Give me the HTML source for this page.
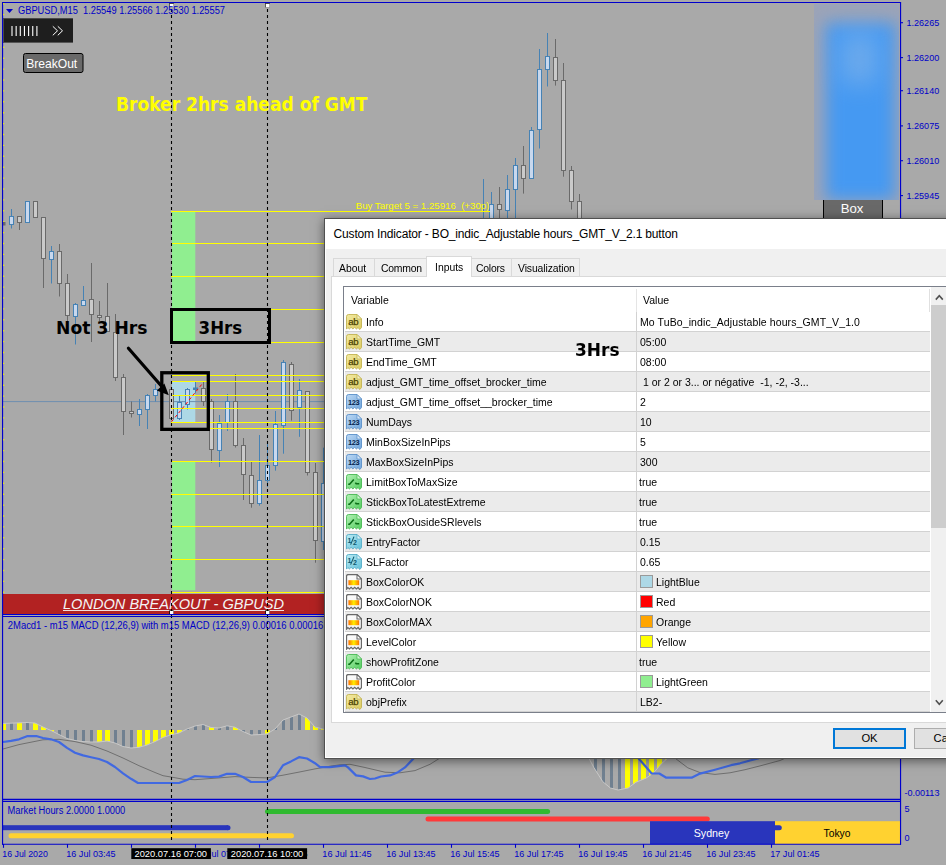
<!DOCTYPE html>
<html><head><meta charset="utf-8"><title>Custom Indicator</title>
<style>
html,body{margin:0;padding:0;}
body{width:946px;height:865px;position:relative;overflow:hidden;background:#a9a9a9;font-family:'Liberation Sans',sans-serif;}
#blurbox{position:absolute;left:814px;top:4px;width:85px;height:196px;overflow:hidden;background:#9ca4b8;}
#blurbox i{position:absolute;left:12px;top:19px;right:4px;bottom:0px;background:#4599f2;filter:blur(8px);display:block}
#blurbox b{position:absolute;left:28px;top:30px;right:22px;height:50px;background:#7ab0ea;filter:blur(12px);display:block;opacity:.75}
#dlg{position:absolute;left:324px;top:218px;width:640px;height:541px;background:#f0f0f0;box-shadow:0 2px 10px rgba(0,0,0,.5);border:1px solid #505050;box-sizing:border-box}
#dlg>*{margin-left:-1px;margin-top:-1px}
#inb{position:absolute;left:0;top:0;width:640px;height:539px;border:1px solid #fff;margin:0;box-sizing:border-box}
#ttl{position:absolute;left:1px;top:1px;right:0;height:30px;background:#fff;}
#ttl span{position:absolute;left:8.6px;top:7.6px;font-size:12px;color:#000;white-space:nowrap;letter-spacing:-0.165px}
.tab{position:absolute;top:40px;height:19px;border:1px solid #d9d9d9;border-bottom:none;background:#f0f0f0;font-size:10.4px;color:#000;box-sizing:border-box;white-space:nowrap}
.tab span{position:absolute;top:3px;font-size:11.5px;transform:scaleX(0.904);transform-origin:0 50%}
.tab.sel{top:38px;height:21px;background:#fff;z-index:3;}
.tab.sel span{top:3.6px}
#tabpage{position:absolute;left:7px;top:58px;width:640px;height:447px;background:#fff;border:1px solid #d9d9d9;box-sizing:border-box}
#list{position:absolute;left:19px;top:68px;width:640px;height:427px;background:#fff;border:1px solid #7a7f8a;box-sizing:border-box;overflow:hidden}
.hd{position:absolute;top:5.8px;color:#000}
.row{position:absolute;left:1px;width:585px;height:19px;border-bottom:1px solid #d2d2d2;background:#fff;font-size:10.5px;color:#000;white-space:nowrap}
.row.g{background:#ebebeb}
.ic{position:absolute;left:1px;top:2px}
.nm,.vt,.vt2,.hd{font-size:11.8px;transform:scaleX(0.89);transform-origin:0 50%}
.vt.w{letter-spacing:0.115px}
.nm{position:absolute;left:21.3px;top:3.4px;}
.val{position:absolute;left:291px;top:0;width:294px;height:19px;border-left:1px solid #d2d2d2;}
.vt{position:absolute;left:2.8px;top:3.4px}
.vt.t{left:2.2px}
.vt2{position:absolute;left:19.4px;top:3.4px}
  .sw{position:absolute;left:3px;top:3px;width:11px;height:11px;border:1px solid #9a9a9a;box-sizing:content-box}
#sb{position:absolute;left:587px;top:0;width:40px;height:426px;background:#f0f0f0}
#sb i{position:absolute;left:0;top:18px;width:40px;height:223px;background:#cdcdcd;display:block}
#ok{position:absolute;left:509px;top:510px;width:73px;height:21px;box-sizing:border-box;border:2px solid #0078d7;background:#e1e1e1;font-size:11.2px;text-align:center;line-height:17px}
#ca{position:absolute;left:590px;top:510px;width:73px;height:21px;box-sizing:border-box;border:1px solid #adadad;background:#e1e1e1;font-size:11.2px;line-height:19px;padding-left:18.6px}
#h3{position:absolute;left:251px;top:120.6px;font-family:'DejaVu Sans',sans-serif;font-weight:bold;font-size:18.2px;color:#000;z-index:5;transform:scaleX(0.935);transform-origin:0 50%}
</style></head><body>
<svg width="946" height="865" viewBox="0 0 946 865" style="position:absolute;left:0;top:0" font-family="'Liberation Sans', sans-serif">
<rect width="946" height="865" fill="#a9a9a9"/>
<!-- profit zones -->
<rect x="172" y="212" width="23.3" height="130.5" fill="#90ee90"/>
<rect x="172" y="461" width="23.3" height="129.3" fill="#90ee90"/>
<rect x="172" y="382" width="23.3" height="40.3" fill="#add8e6"/>
<line x1="3" y1="401.6" x2="900" y2="401.6" stroke="#6f8fb0" stroke-width="1"/>
<line x1="3.5" y1="3" x2="3.5" y2="614" stroke="#ffff00" stroke-width="1.4" stroke-dasharray="1.4 9.5"/>
<line x1="11.5" y1="209" x2="11.5" y2="228.5" stroke="#4682b4" stroke-width="1"/>
<rect x="9.5" y="216.5" width="4" height="8.0" fill="#c8d8ee" stroke="#4682b4" stroke-width="1"/>
<line x1="19.5" y1="216" x2="19.5" y2="230" stroke="#6a6a6a" stroke-width="1"/>
<rect x="17.5" y="216.5" width="4" height="6.0" fill="#cacaca" stroke="#6a6a6a" stroke-width="1"/>
<line x1="27.5" y1="201" x2="27.5" y2="222" stroke="#4682b4" stroke-width="1"/>
<rect x="25.5" y="201.5" width="4" height="21.0" fill="#c8d8ee" stroke="#4682b4" stroke-width="1"/>
<line x1="35.5" y1="201" x2="35.5" y2="217" stroke="#6a6a6a" stroke-width="1"/>
<rect x="33.5" y="201.5" width="4" height="16.0" fill="#cacaca" stroke="#6a6a6a" stroke-width="1"/>
<line x1="43.5" y1="217" x2="43.5" y2="288" stroke="#6a6a6a" stroke-width="1"/>
<rect x="41.5" y="217.5" width="4" height="41.0" fill="#cacaca" stroke="#6a6a6a" stroke-width="1"/>
<line x1="51.5" y1="246" x2="51.5" y2="283.5" stroke="#4682b4" stroke-width="1"/>
<rect x="49.5" y="251.5" width="4" height="8.0" fill="#c8d8ee" stroke="#4682b4" stroke-width="1"/>
<line x1="59.5" y1="244" x2="59.5" y2="296.5" stroke="#6a6a6a" stroke-width="1"/>
<rect x="57.5" y="251.5" width="4" height="32.0" fill="#cacaca" stroke="#6a6a6a" stroke-width="1"/>
<line x1="67.5" y1="274" x2="67.5" y2="321" stroke="#6a6a6a" stroke-width="1"/>
<rect x="65.5" y="283.5" width="4" height="32.0" fill="#cacaca" stroke="#6a6a6a" stroke-width="1"/>
<line x1="75.5" y1="303" x2="75.5" y2="344.5" stroke="#4682b4" stroke-width="1"/>
<rect x="73.5" y="304.5" width="4" height="12.0" fill="#c8d8ee" stroke="#4682b4" stroke-width="1"/>
<line x1="83.5" y1="286" x2="83.5" y2="305" stroke="#4682b4" stroke-width="1"/>
<rect x="81.5" y="300.5" width="4" height="5.0" fill="#c8d8ee" stroke="#4682b4" stroke-width="1"/>
<line x1="91.5" y1="263" x2="91.5" y2="342" stroke="#6a6a6a" stroke-width="1"/>
<rect x="89.5" y="299.5" width="4" height="15.0" fill="#cacaca" stroke="#6a6a6a" stroke-width="1"/>
<line x1="99.5" y1="301" x2="99.5" y2="321" stroke="#6a6a6a" stroke-width="1"/>
<rect x="97.5" y="315.5" width="4" height="2.0" fill="#cacaca" stroke="#6a6a6a" stroke-width="1"/>
<line x1="107.5" y1="283" x2="107.5" y2="332" stroke="#6a6a6a" stroke-width="1"/>
<rect x="105.5" y="316.5" width="4" height="15.0" fill="#cacaca" stroke="#6a6a6a" stroke-width="1"/>
<line x1="115.5" y1="314" x2="115.5" y2="381" stroke="#6a6a6a" stroke-width="1"/>
<rect x="113.5" y="332.5" width="4" height="45.0" fill="#cacaca" stroke="#6a6a6a" stroke-width="1"/>
<line x1="123.5" y1="374" x2="123.5" y2="435" stroke="#6a6a6a" stroke-width="1"/>
<rect x="121.5" y="377.5" width="4" height="34.0" fill="#cacaca" stroke="#6a6a6a" stroke-width="1"/>
<line x1="131.5" y1="401.5" x2="131.5" y2="417.5" stroke="#6a6a6a" stroke-width="1"/>
<rect x="129.5" y="411.5" width="4" height="2.0" fill="#cacaca" stroke="#6a6a6a" stroke-width="1"/>
<line x1="139.5" y1="399" x2="139.5" y2="426" stroke="#4682b4" stroke-width="1"/>
<rect x="137.5" y="409.5" width="4" height="5.0" fill="#c8d8ee" stroke="#4682b4" stroke-width="1"/>
<line x1="147.5" y1="394" x2="147.5" y2="429" stroke="#4682b4" stroke-width="1"/>
<rect x="145.5" y="395.5" width="4" height="14.0" fill="#c8d8ee" stroke="#4682b4" stroke-width="1"/>
<line x1="155.5" y1="384" x2="155.5" y2="401.5" stroke="#4682b4" stroke-width="1"/>
<rect x="153.5" y="389.5" width="4" height="6.0" fill="#c8d8ee" stroke="#4682b4" stroke-width="1"/>
<line x1="171.5" y1="389" x2="171.5" y2="418.5" stroke="#6a6a6a" stroke-width="1"/>
<rect x="169.5" y="389.5" width="4" height="29.0" fill="#cacaca" stroke="#6a6a6a" stroke-width="1"/>
<line x1="179.5" y1="396" x2="179.5" y2="420" stroke="#4682b4" stroke-width="1"/>
<rect x="177.5" y="402.5" width="4" height="16.0" fill="#c8d8ee" stroke="#4682b4" stroke-width="1"/>
<line x1="187.5" y1="388" x2="187.5" y2="409.5" stroke="#4682b4" stroke-width="1"/>
<rect x="185.5" y="389.5" width="4" height="15.0" fill="#c8d8ee" stroke="#4682b4" stroke-width="1"/>
<line x1="195.5" y1="382" x2="195.5" y2="393.5" stroke="#4682b4" stroke-width="1"/>
<rect x="193.5" y="388" width="4" height="1.5" fill="#4682b4" stroke="#4682b4" stroke-width="1"/>
<line x1="203.5" y1="382" x2="203.5" y2="406" stroke="#6a6a6a" stroke-width="1"/>
<rect x="201.5" y="388.5" width="4" height="13.0" fill="#cacaca" stroke="#6a6a6a" stroke-width="1"/>
<line x1="211.5" y1="399" x2="211.5" y2="462.5" stroke="#6a6a6a" stroke-width="1"/>
<rect x="209.5" y="401.5" width="4" height="48.0" fill="#cacaca" stroke="#6a6a6a" stroke-width="1"/>
<line x1="219.5" y1="415" x2="219.5" y2="467" stroke="#4682b4" stroke-width="1"/>
<rect x="217.5" y="423.5" width="4" height="27.0" fill="#c8d8ee" stroke="#4682b4" stroke-width="1"/>
<line x1="227.5" y1="394" x2="227.5" y2="431" stroke="#4682b4" stroke-width="1"/>
<rect x="225.5" y="401.5" width="4" height="21.0" fill="#c8d8ee" stroke="#4682b4" stroke-width="1"/>
<line x1="235.5" y1="374" x2="235.5" y2="447.5" stroke="#6a6a6a" stroke-width="1"/>
<rect x="233.5" y="401.5" width="4" height="44.0" fill="#cacaca" stroke="#6a6a6a" stroke-width="1"/>
<line x1="243.5" y1="438" x2="243.5" y2="500" stroke="#6a6a6a" stroke-width="1"/>
<rect x="241.5" y="445.5" width="4" height="29.0" fill="#cacaca" stroke="#6a6a6a" stroke-width="1"/>
<line x1="251.5" y1="462" x2="251.5" y2="507.7" stroke="#6a6a6a" stroke-width="1"/>
<rect x="249.5" y="475.5" width="4" height="28.0" fill="#cacaca" stroke="#6a6a6a" stroke-width="1"/>
<line x1="259.5" y1="435" x2="259.5" y2="505.7" stroke="#4682b4" stroke-width="1"/>
<rect x="257.5" y="480.5" width="4" height="23.0" fill="#c8d8ee" stroke="#4682b4" stroke-width="1"/>
<line x1="267.5" y1="444" x2="267.5" y2="487" stroke="#4682b4" stroke-width="1"/>
<rect x="265.5" y="465.5" width="4" height="15.0" fill="#c8d8ee" stroke="#4682b4" stroke-width="1"/>
<line x1="275.5" y1="411" x2="275.5" y2="470.7" stroke="#4682b4" stroke-width="1"/>
<rect x="273.5" y="424.5" width="4" height="41.0" fill="#c8d8ee" stroke="#4682b4" stroke-width="1"/>
<line x1="283.5" y1="360" x2="283.5" y2="453.7" stroke="#4682b4" stroke-width="1"/>
<rect x="281.5" y="362.5" width="4" height="63.0" fill="#c8d8ee" stroke="#4682b4" stroke-width="1"/>
<line x1="291.5" y1="362" x2="291.5" y2="420.6" stroke="#6a6a6a" stroke-width="1"/>
<rect x="289.5" y="364.5" width="4" height="46.0" fill="#cacaca" stroke="#6a6a6a" stroke-width="1"/>
<line x1="299.5" y1="379" x2="299.5" y2="436.8" stroke="#4682b4" stroke-width="1"/>
<rect x="297.5" y="390.5" width="4" height="17.0" fill="#c8d8ee" stroke="#4682b4" stroke-width="1"/>
<line x1="307.5" y1="391.3" x2="307.5" y2="475.5" stroke="#6a6a6a" stroke-width="1"/>
<rect x="305.5" y="391.5" width="4" height="81.0" fill="#cacaca" stroke="#6a6a6a" stroke-width="1"/>
<line x1="315.5" y1="463" x2="315.5" y2="562.7" stroke="#6a6a6a" stroke-width="1"/>
<rect x="313.5" y="472.5" width="4" height="68.0" fill="#cacaca" stroke="#6a6a6a" stroke-width="1"/>
<line x1="323.5" y1="447.7" x2="323.5" y2="550" stroke="#4682b4" stroke-width="1"/>
<rect x="321.5" y="483.5" width="4" height="58.0" fill="#c8d8ee" stroke="#4682b4" stroke-width="1"/>
<line x1="483.5" y1="179" x2="483.5" y2="230" stroke="#4682b4" stroke-width="1"/>
<rect x="481.5" y="222.5" width="4" height="8.0" fill="#c8d8ee" stroke="#4682b4" stroke-width="1"/>
<line x1="491.5" y1="192" x2="491.5" y2="230" stroke="#4682b4" stroke-width="1"/>
<rect x="489.5" y="204.5" width="4" height="26.0" fill="#c8d8ee" stroke="#4682b4" stroke-width="1"/>
<line x1="499.5" y1="187" x2="499.5" y2="225" stroke="#6a6a6a" stroke-width="1"/>
<rect x="497.5" y="204.5" width="4" height="5.0" fill="#cacaca" stroke="#6a6a6a" stroke-width="1"/>
<line x1="507.5" y1="175" x2="507.5" y2="225" stroke="#4682b4" stroke-width="1"/>
<rect x="505.5" y="189.5" width="4" height="21.0" fill="#c8d8ee" stroke="#4682b4" stroke-width="1"/>
<line x1="515.5" y1="158" x2="515.5" y2="225" stroke="#4682b4" stroke-width="1"/>
<rect x="513.5" y="165.5" width="4" height="24.0" fill="#c8d8ee" stroke="#4682b4" stroke-width="1"/>
<line x1="523.5" y1="146" x2="523.5" y2="193.6" stroke="#6a6a6a" stroke-width="1"/>
<rect x="521.5" y="165.5" width="4" height="13.0" fill="#cacaca" stroke="#6a6a6a" stroke-width="1"/>
<line x1="531.5" y1="127" x2="531.5" y2="178.8" stroke="#4682b4" stroke-width="1"/>
<rect x="529.5" y="130.5" width="4" height="48.0" fill="#c8d8ee" stroke="#4682b4" stroke-width="1"/>
<line x1="539.5" y1="49" x2="539.5" y2="148.5" stroke="#4682b4" stroke-width="1"/>
<rect x="537.5" y="69.5" width="4" height="60.0" fill="#c8d8ee" stroke="#4682b4" stroke-width="1"/>
<line x1="547.5" y1="33" x2="547.5" y2="86.5" stroke="#4682b4" stroke-width="1"/>
<rect x="545.5" y="56.5" width="4" height="13.0" fill="#c8d8ee" stroke="#4682b4" stroke-width="1"/>
<line x1="555.5" y1="39" x2="555.5" y2="85.6" stroke="#6a6a6a" stroke-width="1"/>
<rect x="553.5" y="57.5" width="4" height="23.0" fill="#cacaca" stroke="#6a6a6a" stroke-width="1"/>
<line x1="563.5" y1="63" x2="563.5" y2="176.7" stroke="#6a6a6a" stroke-width="1"/>
<rect x="561.5" y="80.5" width="4" height="90.0" fill="#cacaca" stroke="#6a6a6a" stroke-width="1"/>
<line x1="571.5" y1="166" x2="571.5" y2="209.5" stroke="#6a6a6a" stroke-width="1"/>
<rect x="569.5" y="170.5" width="4" height="31.0" fill="#cacaca" stroke="#6a6a6a" stroke-width="1"/>
<line x1="579.5" y1="194" x2="579.5" y2="225" stroke="#6a6a6a" stroke-width="1"/>
<rect x="577.5" y="201.5" width="4" height="24.0" fill="#cacaca" stroke="#6a6a6a" stroke-width="1"/>
<line x1="171" y1="211.5" x2="490" y2="211.5" stroke="#ffff00" stroke-width="1.1"/>
<line x1="171" y1="243.5" x2="600" y2="243.5" stroke="#ffff00" stroke-width="1.1"/>
<line x1="171" y1="276.5" x2="600" y2="276.5" stroke="#ffff00" stroke-width="1.1"/>
<line x1="171" y1="309.5" x2="600" y2="309.5" stroke="#ffff00" stroke-width="1.1"/>
<line x1="171" y1="342.5" x2="600" y2="342.5" stroke="#ffff00" stroke-width="1.1"/>
<line x1="171" y1="375.5" x2="600" y2="375.5" stroke="#ffff00" stroke-width="1.1"/>
<line x1="171" y1="381.5" x2="600" y2="381.5" stroke="#ffff00" stroke-width="1.1"/>
<line x1="171" y1="395.5" x2="600" y2="395.5" stroke="#ffff00" stroke-width="1.1"/>
<line x1="171" y1="408.5" x2="600" y2="408.5" stroke="#ffff00" stroke-width="1.1"/>
<line x1="171" y1="422.5" x2="600" y2="422.5" stroke="#ffff00" stroke-width="1.1"/>
<line x1="171" y1="428.5" x2="600" y2="428.5" stroke="#ffff00" stroke-width="1.1"/>
<line x1="171" y1="461.5" x2="600" y2="461.5" stroke="#ffff00" stroke-width="1.1"/>
<line x1="171" y1="494.5" x2="600" y2="494.5" stroke="#ffff00" stroke-width="1.1"/>
<line x1="171" y1="526.5" x2="600" y2="526.5" stroke="#ffff00" stroke-width="1.1"/>
<line x1="171" y1="559.5" x2="600" y2="559.5" stroke="#ffff00" stroke-width="1.1"/>
<line x1="171" y1="592.5" x2="600" y2="592.5" stroke="#ffff00" stroke-width="1.1"/>
<line x1="171.6" y1="421.7" x2="202" y2="384.1" stroke="#ff0000" stroke-width="1" stroke-dasharray="3 2.6"/>
<text x="355.7" y="209.2" font-size="9.6" fill="#ffff00" textLength="133.7" lengthAdjust="spacingAndGlyphs" style="white-space:pre">Buy Target 5 = 1.25916  (+30p)</text>
<rect x="3" y="222" width="2.5" height="3.5" fill="#6a6a6a"/>
<!-- red banner -->
<rect x="3" y="594" width="897" height="20" fill="#b22222"/>
<text x="63" y="609.3" font-size="14.4" font-style="italic" fill="#f4f4f4" textLength="221" lengthAdjust="spacingAndGlyphs">LONDON BREAKOUT - GBPUSD</text>
<line x1="63" y1="610.5" x2="284" y2="610.5" stroke="#f4f4f4" stroke-width="0.9"/>
<!-- macd -->
<defs><clipPath id="c1"><polygon points="3,723.5 27,722.5 35,723 43,727 51,730.5 59,734.5 67,738.5 75,740.5 83,741.6 91,742 99,742 107,741 115,743 123,746.5 131,748 139,747.3 147,745 155,741.6 163,737.5 171,734.8 179,733 187,729 195,726 203,724.5 211,727.5 219,728 227,725.8 235,727.2 243,731.5 251,735 259,734.6 267,733.9 275,729 283,720 291,717 299,714 307,718 315,727 323,729 331,731 331,730 -5,730 -5,723.5"/></clipPath>
<clipPath id="c2"><polygon points="583,745 588.9,758.2 594,767.8 602.8,781.7 610.4,788 618,790 628.2,788 635.8,782.3 646,778.2 653.6,772.8 661.2,764 667.5,758.2 676,748 676,730 583,730"/></clipPath></defs>
<rect x="3" y="720" width="3" height="10.0" fill="#ffff00" clip-path="url(#c1)"/>
<rect x="10" y="720" width="3" height="10.0" fill="#708090" clip-path="url(#c1)"/>
<rect x="17" y="720" width="5" height="10.0" fill="#ffff00" clip-path="url(#c1)"/>
<rect x="26" y="719" width="3" height="11.0" fill="#708090" clip-path="url(#c1)"/>
<rect x="33" y="719" width="5" height="11.0" fill="#ffff00" clip-path="url(#c1)"/>
<rect x="41" y="723.5" width="5" height="6.5" fill="#ffff00" clip-path="url(#c1)"/>
<rect x="49" y="730" width="5" height="3.0" fill="#ffff00" clip-path="url(#c1)"/>
<rect x="58" y="730" width="3" height="8.4" fill="#708090" clip-path="url(#c1)"/>
<rect x="66" y="730" width="3" height="12.4" fill="#708090" clip-path="url(#c1)"/>
<rect x="74" y="730" width="3" height="14.5" fill="#708090" clip-path="url(#c1)"/>
<rect x="82" y="730" width="3" height="15.6" fill="#708090" clip-path="url(#c1)"/>
<rect x="90" y="730" width="3" height="16.0" fill="#708090" clip-path="url(#c1)"/>
<rect x="97" y="730" width="5" height="16.0" fill="#ffff00" clip-path="url(#c1)"/>
<rect x="105" y="730" width="5" height="15.0" fill="#ffff00" clip-path="url(#c1)"/>
<rect x="114" y="730" width="3" height="17.0" fill="#708090" clip-path="url(#c1)"/>
<rect x="122" y="730" width="3" height="20.4" fill="#708090" clip-path="url(#c1)"/>
<rect x="130" y="730" width="3" height="22.0" fill="#708090" clip-path="url(#c1)"/>
<rect x="137" y="730" width="5" height="21.3" fill="#ffff00" clip-path="url(#c1)"/>
<rect x="145" y="730" width="5" height="19.2" fill="#ffff00" clip-path="url(#c1)"/>
<rect x="153" y="730" width="5" height="15.6" fill="#ffff00" clip-path="url(#c1)"/>
<rect x="161" y="730" width="5" height="11.5" fill="#ffff00" clip-path="url(#c1)"/>
<rect x="169" y="730" width="5" height="8.8" fill="#ffff00" clip-path="url(#c1)"/>
<rect x="177" y="730" width="5" height="7.0" fill="#ffff00" clip-path="url(#c1)"/>
<rect x="186" y="726.6" width="3" height="3.4" fill="#708090" clip-path="url(#c1)"/>
<rect x="194" y="722.1" width="3" height="7.9" fill="#708090" clip-path="url(#c1)"/>
<rect x="202" y="720.9" width="3" height="9.1" fill="#708090" clip-path="url(#c1)"/>
<rect x="209" y="723.6" width="5" height="6.4" fill="#ffff00" clip-path="url(#c1)"/>
<rect x="218" y="724" width="3" height="6.0" fill="#708090" clip-path="url(#c1)"/>
<rect x="226" y="721.8" width="3" height="8.2" fill="#708090" clip-path="url(#c1)"/>
<rect x="233" y="723.2" width="5" height="6.8" fill="#ffff00" clip-path="url(#c1)"/>
<rect x="242" y="730" width="3" height="3.5" fill="#708090" clip-path="url(#c1)"/>
<rect x="250" y="730" width="3" height="8.8" fill="#708090" clip-path="url(#c1)"/>
<rect x="258" y="730" width="3" height="8.4" fill="#708090" clip-path="url(#c1)"/>
<rect x="265" y="730" width="5" height="7.9" fill="#ffff00" clip-path="url(#c1)"/>
<rect x="274" y="726.6" width="3" height="3.4" fill="#708090" clip-path="url(#c1)"/>
<rect x="282" y="716" width="3" height="14.0" fill="#708090" clip-path="url(#c1)"/>
<rect x="290" y="713.2" width="3" height="16.8" fill="#708090" clip-path="url(#c1)"/>
<rect x="298" y="710" width="3" height="20.0" fill="#708090" clip-path="url(#c1)"/>
<rect x="305" y="714.2" width="5" height="15.8" fill="#ffff00" clip-path="url(#c1)"/>
<rect x="313" y="723.2" width="5" height="6.8" fill="#ffff00" clip-path="url(#c1)"/>
<rect x="321" y="727.0" width="5" height="3.0" fill="#ffff00" clip-path="url(#c1)"/>
<rect x="594" y="730" width="3" height="42.0" fill="#708090" clip-path="url(#c2)"/>
<rect x="602" y="730" width="3" height="55.7" fill="#708090" clip-path="url(#c2)"/>
<rect x="610" y="730" width="3" height="62.0" fill="#708090" clip-path="url(#c2)"/>
<rect x="618" y="730" width="3" height="64.0" fill="#708090" clip-path="url(#c2)"/>
<rect x="625" y="730" width="5" height="62.7" fill="#ffff00" clip-path="url(#c2)"/>
<rect x="633" y="730" width="5" height="57.6" fill="#ffff00" clip-path="url(#c2)"/>
<rect x="641" y="730" width="5" height="53.8" fill="#ffff00" clip-path="url(#c2)"/>
<rect x="649" y="730" width="5" height="49.4" fill="#ffff00" clip-path="url(#c2)"/>
<rect x="657" y="730" width="5" height="40.0" fill="#ffff00" clip-path="url(#c2)"/>
<rect x="665" y="730" width="5" height="33.5" fill="#ffff00" clip-path="url(#c2)"/>
<polyline fill="none" stroke="#c8c8c8" stroke-width="1" stroke-linejoin="round" points="3,723.5 27,722.5 35,723 43,727 51,730.5 59,734.5 67,738.5 75,740.5 83,741.6 91,742 99,742 107,741 115,743 123,746.5 131,748 139,747.3 147,745 155,741.6 163,737.5 171,734.8 179,733 187,729 195,726 203,724.5 211,727.5 219,728 227,725.8 235,727.2 243,731.5 251,735 259,734.6 267,733.9 275,729 283,720 291,717 299,714 307,718 315,727 323,729 331,731"/>
<polyline fill="none" stroke="#c8c8c8" stroke-width="1" stroke-linejoin="round" points="583,745 588.9,758.2 594,767.8 602.8,781.7 610.4,788 618,790 628.2,788 635.8,782.3 646,778.2 653.6,772.8 661.2,764 667.5,758.2 676,748"/>
<polyline fill="none" stroke="#707070" stroke-width="1" stroke-linejoin="round" points="3,749 19,744.6 43,739.8 59,739.3 75,741.6 91,745.2 107,751 123,758 139,765.7 155,772.5 163,775.7 171,777 183,779.2 195,779.7 219,777.9 235,776.6 251,777.4 267,777.9 283,775.2 299,772.1 315,768.9 330,766.2 340,764.8 350,764.3 365,767.5 385,772.2 400,772.8 415,770.6 430,764.3 440,758 450,750"/>
<polyline fill="none" stroke="#707070" stroke-width="1" stroke-linejoin="round" points="662,745 675.1,758.2 687.8,767.8 700,772.6 715,774.4 730,772.8 745,769.7 760,765.9 780,760.5 790,756"/>
<polyline fill="none" stroke="#4169e1" stroke-width="2.2" stroke-linejoin="round" points="3,742 11,740.8 19,739.3 27,736.2 37,736.2 43,738 51,739.3 59,742 67,747.9 75,752.7 83,755.4 91,757.2 99,759 107,762 115,767 123,773.4 131,778.8 138,783 179,783 187,780 195,776 211,777 219,776.6 227,773.8 235,773.8 243,777 251,782 267,782 275,777 283,765.3 291,761.4 299,757.2 307,758.5 315,763.2 320,767.1 330,767.1 345,765.4 348,767.4 356,775.4 363,776.4 370,779 375,778.5 381,776.5 390,775.4 398,772.2 405,767.4 414,758 420,750"/>
<polyline fill="none" stroke="#4169e1" stroke-width="2.2" stroke-linejoin="round" points="627,745 638.4,758.2 651.7,773.5 659.3,773.5 666.3,777.7 691.6,777.7 700,773.6 715,769.7 731,765.2 740,763.3 750,760.5 758,758.5 770,752"/>
<!-- market hours -->
<rect x="3" y="825.2" width="225" height="5" fill="#2935bc"/><circle cx="228" cy="827.7" r="2.5" fill="#2935bc"/>
<line x1="11" y1="835.8" x2="291.5" y2="835.8" stroke="#ffd230" stroke-width="5" stroke-linecap="round"/>
<line x1="267.5" y1="811.4" x2="547.6" y2="811.4" stroke="#30ba30" stroke-width="5" stroke-linecap="round"/>
<line x1="428" y1="819.1" x2="707.3" y2="819.1" stroke="#ff3a3a" stroke-width="5" stroke-linecap="round"/>
<rect x="650" y="821.2" width="125" height="23" fill="#2935bc"/>
<rect x="775" y="821.2" width="125.5" height="23" fill="#ffd230"/>
<line x1="775" y1="827.7" x2="779.3" y2="827.7" stroke="#2935bc" stroke-width="5" stroke-linecap="round"/>
<text x="711.5" y="836.7" font-size="10.7" fill="#ffffff" text-anchor="middle">Sydney</text>
<text x="837" y="836.7" font-size="10.3" fill="#000000" text-anchor="middle">Tokyo</text>
<!-- dashed verticals -->
<line x1="171.5" y1="3" x2="171.5" y2="841" stroke="#000" stroke-width="1.1" stroke-dasharray="3 3"/>
<line x1="267.5" y1="3" x2="267.5" y2="841" stroke="#000" stroke-width="1.1" stroke-dasharray="3 3"/>
<rect x="169.3" y="610.3" width="4.2" height="4" fill="#000"/><rect x="265.3" y="610.3" width="4.2" height="4" fill="#000"/>
<rect x="170" y="611" width="3.4" height="3.2" fill="#fff"/><rect x="266" y="611" width="3.4" height="3.2" fill="#fff"/>
<rect x="169.3" y="3" width="4.4" height="4.4" fill="#000"/><rect x="265.3" y="3" width="4.4" height="4.4" fill="#000"/>
<rect x="169.8" y="3.7" width="3.8" height="3.7" fill="#fff"/><rect x="265.8" y="3.7" width="3.8" height="3.7" fill="#fff"/>
<!-- annotation boxes -->
<rect x="171.5" y="309.5" width="98" height="33" fill="none" stroke="#000" stroke-width="3"/>
<rect x="161.8" y="372.75" width="46.5" height="56.6" fill="none" stroke="#000" stroke-width="3.3"/>
<line x1="128.4" y1="348.3" x2="164" y2="389" stroke="#000" stroke-width="3.2" stroke-linecap="round"/>
<polygon points="168.8,395.3 156.8,390.6 164.4,383.6" fill="#000"/>
<text x="56" y="334.3" font-family="'DejaVu Sans', sans-serif" font-weight="bold" font-size="18.2" fill="#000" textLength="91.5" lengthAdjust="spacingAndGlyphs">Not 3 Hrs</text>
<text x="198.6" y="334.3" font-family="'DejaVu Sans', sans-serif" font-weight="bold" font-size="18.2" fill="#000" textLength="43.5" lengthAdjust="spacingAndGlyphs">3Hrs</text>
<text x="116" y="111" font-family="'DejaVu Sans', sans-serif" font-weight="bold" font-size="18.6" fill="#ffff00" textLength="251.5" lengthAdjust="spacingAndGlyphs">Broker 2hrs ahead of GMT</text>
<!-- pane borders -->
<g stroke="#0000cd" stroke-width="1.15" fill="none">
<line x1="2.55" y1="2" x2="2.55" y2="844.7"/>
<line x1="2" y1="2.5" x2="901" y2="2.5"/>
<line x1="900.55" y1="2" x2="900.55" y2="844.7"/>
<line x1="2" y1="614.5" x2="901" y2="614.5"/>
<line x1="2" y1="616.5" x2="901" y2="616.5"/>
<line x1="2" y1="799.35" x2="901" y2="799.35"/>
<line x1="2" y1="801.35" x2="901" y2="801.35"/>
<line x1="2" y1="844.2" x2="901" y2="844.2"/>
</g>
<line x1="900" y1="22.7" x2="903" y2="22.7" stroke="#0000cd" stroke-width="1.1"/>
<text x="906.5" y="26.0" font-size="9.05" fill="#0000c8">1.26265</text>
<line x1="900" y1="57.6" x2="903" y2="57.6" stroke="#0000cd" stroke-width="1.1"/>
<text x="906.5" y="60.9" font-size="9.05" fill="#0000c8">1.26200</text>
<line x1="900" y1="90.7" x2="903" y2="90.7" stroke="#0000cd" stroke-width="1.1"/>
<text x="906.5" y="94.0" font-size="9.05" fill="#0000c8">1.26140</text>
<line x1="900" y1="125.9" x2="903" y2="125.9" stroke="#0000cd" stroke-width="1.1"/>
<text x="906.5" y="129.20000000000002" font-size="9.05" fill="#0000c8">1.26075</text>
<line x1="900" y1="160.7" x2="903" y2="160.7" stroke="#0000cd" stroke-width="1.1"/>
<text x="906.5" y="164.0" font-size="9.05" fill="#0000c8">1.26010</text>
<line x1="900" y1="195.6" x2="903" y2="195.6" stroke="#0000cd" stroke-width="1.1"/>
<text x="906.5" y="198.9" font-size="9.05" fill="#0000c8">1.25945</text>
<text x="904.4" y="796.1999999999999" font-size="9.05" fill="#0000c8">-0.00113</text>
<text x="904.4" y="812.0999999999999" font-size="9.05" fill="#0000c8">5</text>
<text x="904.4" y="840.5999999999999" font-size="9.05" fill="#0000c8">0</text>
<text x="2.3" y="856.7" font-size="9.2" fill="#0000c8" textLength="45.5" lengthAdjust="spacingAndGlyphs">16 Jul 2020</text>
<text x="66.3" y="856.7" font-size="9.2" fill="#0000c8" textLength="49.3" lengthAdjust="spacingAndGlyphs">16 Jul 03:45</text>
<text x="194.3" y="856.7" font-size="9.2" fill="#0000c8" textLength="49.3" lengthAdjust="spacingAndGlyphs">16 Jul 07:45</text>
<text x="258.3" y="856.7" font-size="9.2" fill="#0000c8" textLength="49.3" lengthAdjust="spacingAndGlyphs">16 Jul 09:45</text>
<text x="322.3" y="856.7" font-size="9.2" fill="#0000c8" textLength="49.3" lengthAdjust="spacingAndGlyphs">16 Jul 11:45</text>
<text x="386.3" y="856.7" font-size="9.2" fill="#0000c8" textLength="49.3" lengthAdjust="spacingAndGlyphs">16 Jul 13:45</text>
<text x="450.3" y="856.7" font-size="9.2" fill="#0000c8" textLength="49.3" lengthAdjust="spacingAndGlyphs">16 Jul 15:45</text>
<text x="514.3" y="856.7" font-size="9.2" fill="#0000c8" textLength="49.3" lengthAdjust="spacingAndGlyphs">16 Jul 17:45</text>
<text x="578.3" y="856.7" font-size="9.2" fill="#0000c8" textLength="49.3" lengthAdjust="spacingAndGlyphs">16 Jul 19:45</text>
<text x="642.3" y="856.7" font-size="9.2" fill="#0000c8" textLength="49.3" lengthAdjust="spacingAndGlyphs">16 Jul 21:45</text>
<text x="706.3" y="856.7" font-size="9.2" fill="#0000c8" textLength="49.3" lengthAdjust="spacingAndGlyphs">16 Jul 23:45</text>
<text x="770.3" y="856.7" font-size="9.2" fill="#0000c8" textLength="49.3" lengthAdjust="spacingAndGlyphs">17 Jul 01:45</text>
<line x1="3.5" y1="844" x2="3.5" y2="847.8" stroke="#0000cd" stroke-width="1.1"/>
<line x1="67.5" y1="844" x2="67.5" y2="847.8" stroke="#0000cd" stroke-width="1.1"/>
<line x1="131.5" y1="844" x2="131.5" y2="847.8" stroke="#0000cd" stroke-width="1.1"/>
<line x1="195.5" y1="844" x2="195.5" y2="847.8" stroke="#0000cd" stroke-width="1.1"/>
<line x1="259.5" y1="844" x2="259.5" y2="847.8" stroke="#0000cd" stroke-width="1.1"/>
<line x1="323.5" y1="844" x2="323.5" y2="847.8" stroke="#0000cd" stroke-width="1.1"/>
<line x1="387.5" y1="844" x2="387.5" y2="847.8" stroke="#0000cd" stroke-width="1.1"/>
<line x1="451.5" y1="844" x2="451.5" y2="847.8" stroke="#0000cd" stroke-width="1.1"/>
<line x1="515.5" y1="844" x2="515.5" y2="847.8" stroke="#0000cd" stroke-width="1.1"/>
<line x1="579.5" y1="844" x2="579.5" y2="847.8" stroke="#0000cd" stroke-width="1.1"/>
<line x1="643.5" y1="844" x2="643.5" y2="847.8" stroke="#0000cd" stroke-width="1.1"/>
<line x1="707.5" y1="844" x2="707.5" y2="847.8" stroke="#0000cd" stroke-width="1.1"/>
<line x1="771.5" y1="844" x2="771.5" y2="847.8" stroke="#0000cd" stroke-width="1.1"/>
<!-- time boxes -->
<rect x="131.3" y="848.2" width="79.6" height="10.8" fill="#000"/>
<text x="134.5" y="857" font-size="9.2" fill="#fff" textLength="72.5" lengthAdjust="spacingAndGlyphs">2020.07.16 07:00</text>
<rect x="227.3" y="848.2" width="79.8" height="10.8" fill="#000"/>
<text x="230.8" y="857" font-size="9.2" fill="#fff" textLength="72.5" lengthAdjust="spacingAndGlyphs">2020.07.16 10:00</text>
<!-- titles -->
<polygon points="6,9 13,9 9.5,13" fill="#0000c8"/>
<text x="18" y="13.8" font-size="10" fill="#0000c8" textLength="207" lengthAdjust="spacingAndGlyphs" style="white-space:pre">GBPUSD,M15  1.25549 1.25566 1.25530 1.25557</text>
<text x="7.8" y="629.4" font-size="10" fill="#0000c8" textLength="315.5" lengthAdjust="spacingAndGlyphs">2Macd1 - m15 MACD (12,26,9) with m15 MACD (12,26,9) 0.00016 0.00016</text>
<text x="7.6" y="814.1" font-size="10" fill="#0000c8" textLength="117.7" lengthAdjust="spacingAndGlyphs">Market Hours 2.0000 1.0000</text>
<!-- top-left toolbar -->
<rect x="3" y="18" width="70" height="24.6" fill="#1e1e1e"/>
<rect x="3" y="18" width="70" height="1" fill="#4a4a4a"/><rect x="3" y="18" width="1" height="24.6" fill="#4a4a4a"/>
<g stroke="#fff" stroke-width="1.1">
<line x1="12.00" y1="26" x2="12.00" y2="36"/><line x1="16.15" y1="26" x2="16.15" y2="36"/><line x1="20.30" y1="26" x2="20.30" y2="36"/><line x1="24.45" y1="26" x2="24.45" y2="36"/><line x1="28.60" y1="26" x2="28.60" y2="36"/><line x1="32.75" y1="26" x2="32.75" y2="36"/><line x1="36.90" y1="26" x2="36.90" y2="36"/>
</g>
<g stroke="#fff" stroke-width="1" fill="none"><polyline points="52.8,26.3 57.5,30.8 52.8,35.3"/><polyline points="57.8,26.3 62.5,30.8 57.8,35.3"/></g>
<!-- BreakOut button -->
<rect x="23.5" y="53.5" width="59.5" height="19" rx="2" fill="#696969" stroke="#000" stroke-width="1"/>
<text x="53.2" y="67.8" font-size="12.1" fill="#fff" text-anchor="middle" dx="-1.5">BreakOut</text>
<!-- Box button -->
<rect x="823.5" y="199.5" width="59" height="19" fill="#696969" stroke="#000" stroke-width="1"/>
<text x="852" y="212.8" font-size="13.2" fill="#fff" text-anchor="middle">Box</text>
</svg>
<div id="blurbox"><i></i><b></b></div>
<div id="dlg">
<div id="inb"></div>
<div id="ttl"><span>Custom Indicator - BO_indic_Adjustable hours_GMT_V_2.1 button</span></div>
<div class="tab" style="left:9px;width:42px"><span style="left:5.2px">About</span></div>
<div class="tab" style="left:50px;width:53px"><span style="left:5.8px;letter-spacing:-0.25px">Common</span></div>
<div class="tab sel" style="left:102px;width:46px"><span style="left:7.6px">Inputs</span></div>
<div class="tab" style="left:147px;width:41px"><span style="left:3.8px;letter-spacing:-0.25px">Colors</span></div>
<div class="tab" style="left:187px;width:69px"><span style="left:6.4px;letter-spacing:-0.12px">Visualization</span></div>
<div id="tabpage"></div>
<div id="list">
<span class="hd" style="left:7.2px">Variable</span><span class="hd" style="left:299.3px">Value</span>
<div style="position:absolute;left:292px;top:2px;width:1px;height:23px;background:#e5e5e5"></div>
<div style="position:absolute;left:584.6px;top:2px;width:1px;height:23px;background:#e0e0e0"></div>
<div class="row" style="top:25px"><svg class="ic" width="16" height="16" viewBox="0 0 16 16"><defs><linearGradient id="gab" x1="0" y1="0" x2="1" y2="1"><stop offset="0" stop-color="#f3eba4"/><stop offset="1" stop-color="#dccb62"/></linearGradient><linearGradient id="og" x1="0" x2="1"><stop offset="0" stop-color="#ff7000"/><stop offset=".5" stop-color="#fff000"/><stop offset="1" stop-color="#ff7000"/></linearGradient></defs><path d="M0.5,2.6 Q0.5,0.5 2.6,0.5 L11,0.5 L15.5,5 L15.5,13.6 L13.7,15.5 L12.1,13.5 L10.4,14.9 L8.7,13.3 L6.9,14.9 L5.1,13.3 L3.4,14.9 L1.9,13.6 L0.5,15.1 Z" fill="url(#gab)" stroke="#c2b250" stroke-width="0.9"/><path d="M11,0.5 L11,5 L15.5,5 Z" fill="#f6f0c0" stroke="#c2b250" stroke-width="0.72"/><text x="7.2" y="11.4" font-size="9.6" fill="#4a4200" stroke="#4a4200" stroke-width="0.25" text-anchor="middle" font-family="'Liberation Sans',sans-serif" letter-spacing="-0.3">ab</text></svg><span class="nm">Info</span><span class="val"><span class="vt w">Mo TuBo_indic_Adjustable hours_GMT_V_1.0</span></span></div>
<div class="row g" style="top:45px"><svg class="ic" width="16" height="16" viewBox="0 0 16 16"><defs><linearGradient id="gab" x1="0" y1="0" x2="1" y2="1"><stop offset="0" stop-color="#f3eba4"/><stop offset="1" stop-color="#dccb62"/></linearGradient><linearGradient id="og" x1="0" x2="1"><stop offset="0" stop-color="#ff7000"/><stop offset=".5" stop-color="#fff000"/><stop offset="1" stop-color="#ff7000"/></linearGradient></defs><path d="M0.5,2.6 Q0.5,0.5 2.6,0.5 L11,0.5 L15.5,5 L15.5,13.6 L13.7,15.5 L12.1,13.5 L10.4,14.9 L8.7,13.3 L6.9,14.9 L5.1,13.3 L3.4,14.9 L1.9,13.6 L0.5,15.1 Z" fill="url(#gab)" stroke="#c2b250" stroke-width="0.9"/><path d="M11,0.5 L11,5 L15.5,5 Z" fill="#f6f0c0" stroke="#c2b250" stroke-width="0.72"/><text x="7.2" y="11.4" font-size="9.6" fill="#4a4200" stroke="#4a4200" stroke-width="0.25" text-anchor="middle" font-family="'Liberation Sans',sans-serif" letter-spacing="-0.3">ab</text></svg><span class="nm">StartTime_GMT</span><span class="val"><span class="vt">05:00</span></span></div>
<div class="row" style="top:65px"><svg class="ic" width="16" height="16" viewBox="0 0 16 16"><defs><linearGradient id="gab" x1="0" y1="0" x2="1" y2="1"><stop offset="0" stop-color="#f3eba4"/><stop offset="1" stop-color="#dccb62"/></linearGradient><linearGradient id="og" x1="0" x2="1"><stop offset="0" stop-color="#ff7000"/><stop offset=".5" stop-color="#fff000"/><stop offset="1" stop-color="#ff7000"/></linearGradient></defs><path d="M0.5,2.6 Q0.5,0.5 2.6,0.5 L11,0.5 L15.5,5 L15.5,13.6 L13.7,15.5 L12.1,13.5 L10.4,14.9 L8.7,13.3 L6.9,14.9 L5.1,13.3 L3.4,14.9 L1.9,13.6 L0.5,15.1 Z" fill="url(#gab)" stroke="#c2b250" stroke-width="0.9"/><path d="M11,0.5 L11,5 L15.5,5 Z" fill="#f6f0c0" stroke="#c2b250" stroke-width="0.72"/><text x="7.2" y="11.4" font-size="9.6" fill="#4a4200" stroke="#4a4200" stroke-width="0.25" text-anchor="middle" font-family="'Liberation Sans',sans-serif" letter-spacing="-0.3">ab</text></svg><span class="nm">EndTime_GMT</span><span class="val"><span class="vt">08:00</span></span></div>
<div class="row g" style="top:85px"><svg class="ic" width="16" height="16" viewBox="0 0 16 16"><defs><linearGradient id="gab" x1="0" y1="0" x2="1" y2="1"><stop offset="0" stop-color="#f3eba4"/><stop offset="1" stop-color="#dccb62"/></linearGradient><linearGradient id="og" x1="0" x2="1"><stop offset="0" stop-color="#ff7000"/><stop offset=".5" stop-color="#fff000"/><stop offset="1" stop-color="#ff7000"/></linearGradient></defs><path d="M0.5,2.6 Q0.5,0.5 2.6,0.5 L11,0.5 L15.5,5 L15.5,13.6 L13.7,15.5 L12.1,13.5 L10.4,14.9 L8.7,13.3 L6.9,14.9 L5.1,13.3 L3.4,14.9 L1.9,13.6 L0.5,15.1 Z" fill="url(#gab)" stroke="#c2b250" stroke-width="0.9"/><path d="M11,0.5 L11,5 L15.5,5 Z" fill="#f6f0c0" stroke="#c2b250" stroke-width="0.72"/><text x="7.2" y="11.4" font-size="9.6" fill="#4a4200" stroke="#4a4200" stroke-width="0.25" text-anchor="middle" font-family="'Liberation Sans',sans-serif" letter-spacing="-0.3">ab</text></svg><span class="nm">adjust_GMT_time_offset_brocker_time</span><span class="val"><span class="vt">&nbsp;1 or 2 or 3... or négative&nbsp; -1, -2, -3...</span></span></div>
<div class="row" style="top:105px"><svg class="ic" width="16" height="16" viewBox="0 0 16 16"><defs><linearGradient id="g123" x1="0" y1="0" x2="1" y2="1"><stop offset="0" stop-color="#bcd8f4"/><stop offset="1" stop-color="#70a6dc"/></linearGradient><linearGradient id="og" x1="0" x2="1"><stop offset="0" stop-color="#ff7000"/><stop offset=".5" stop-color="#fff000"/><stop offset="1" stop-color="#ff7000"/></linearGradient></defs><path d="M0.5,2.6 Q0.5,0.5 2.6,0.5 L11,0.5 L15.5,5 L15.5,13.6 L13.7,15.5 L12.1,13.5 L10.4,14.9 L8.7,13.3 L6.9,14.9 L5.1,13.3 L3.4,14.9 L1.9,13.6 L0.5,15.1 Z" fill="url(#g123)" stroke="#5a90c8" stroke-width="0.9"/><path d="M11,0.5 L11,5 L15.5,5 Z" fill="#d8e8f8" stroke="#5a90c8" stroke-width="0.72"/><text x="7.6" y="11.2" font-size="7.4" font-weight="bold" fill="#06244c" text-anchor="middle" font-family="'Liberation Sans',sans-serif" letter-spacing="-0.35">123</text></svg><span class="nm">adjust_GMT_time_offset__brocker_time</span><span class="val"><span class="vt">2</span></span></div>
<div class="row g" style="top:125px"><svg class="ic" width="16" height="16" viewBox="0 0 16 16"><defs><linearGradient id="g123" x1="0" y1="0" x2="1" y2="1"><stop offset="0" stop-color="#bcd8f4"/><stop offset="1" stop-color="#70a6dc"/></linearGradient><linearGradient id="og" x1="0" x2="1"><stop offset="0" stop-color="#ff7000"/><stop offset=".5" stop-color="#fff000"/><stop offset="1" stop-color="#ff7000"/></linearGradient></defs><path d="M0.5,2.6 Q0.5,0.5 2.6,0.5 L11,0.5 L15.5,5 L15.5,13.6 L13.7,15.5 L12.1,13.5 L10.4,14.9 L8.7,13.3 L6.9,14.9 L5.1,13.3 L3.4,14.9 L1.9,13.6 L0.5,15.1 Z" fill="url(#g123)" stroke="#5a90c8" stroke-width="0.9"/><path d="M11,0.5 L11,5 L15.5,5 Z" fill="#d8e8f8" stroke="#5a90c8" stroke-width="0.72"/><text x="7.6" y="11.2" font-size="7.4" font-weight="bold" fill="#06244c" text-anchor="middle" font-family="'Liberation Sans',sans-serif" letter-spacing="-0.35">123</text></svg><span class="nm">NumDays</span><span class="val"><span class="vt">10</span></span></div>
<div class="row" style="top:145px"><svg class="ic" width="16" height="16" viewBox="0 0 16 16"><defs><linearGradient id="g123" x1="0" y1="0" x2="1" y2="1"><stop offset="0" stop-color="#bcd8f4"/><stop offset="1" stop-color="#70a6dc"/></linearGradient><linearGradient id="og" x1="0" x2="1"><stop offset="0" stop-color="#ff7000"/><stop offset=".5" stop-color="#fff000"/><stop offset="1" stop-color="#ff7000"/></linearGradient></defs><path d="M0.5,2.6 Q0.5,0.5 2.6,0.5 L11,0.5 L15.5,5 L15.5,13.6 L13.7,15.5 L12.1,13.5 L10.4,14.9 L8.7,13.3 L6.9,14.9 L5.1,13.3 L3.4,14.9 L1.9,13.6 L0.5,15.1 Z" fill="url(#g123)" stroke="#5a90c8" stroke-width="0.9"/><path d="M11,0.5 L11,5 L15.5,5 Z" fill="#d8e8f8" stroke="#5a90c8" stroke-width="0.72"/><text x="7.6" y="11.2" font-size="7.4" font-weight="bold" fill="#06244c" text-anchor="middle" font-family="'Liberation Sans',sans-serif" letter-spacing="-0.35">123</text></svg><span class="nm">MinBoxSizeInPips</span><span class="val"><span class="vt">5</span></span></div>
<div class="row g" style="top:165px"><svg class="ic" width="16" height="16" viewBox="0 0 16 16"><defs><linearGradient id="g123" x1="0" y1="0" x2="1" y2="1"><stop offset="0" stop-color="#bcd8f4"/><stop offset="1" stop-color="#70a6dc"/></linearGradient><linearGradient id="og" x1="0" x2="1"><stop offset="0" stop-color="#ff7000"/><stop offset=".5" stop-color="#fff000"/><stop offset="1" stop-color="#ff7000"/></linearGradient></defs><path d="M0.5,2.6 Q0.5,0.5 2.6,0.5 L11,0.5 L15.5,5 L15.5,13.6 L13.7,15.5 L12.1,13.5 L10.4,14.9 L8.7,13.3 L6.9,14.9 L5.1,13.3 L3.4,14.9 L1.9,13.6 L0.5,15.1 Z" fill="url(#g123)" stroke="#5a90c8" stroke-width="0.9"/><path d="M11,0.5 L11,5 L15.5,5 Z" fill="#d8e8f8" stroke="#5a90c8" stroke-width="0.72"/><text x="7.6" y="11.2" font-size="7.4" font-weight="bold" fill="#06244c" text-anchor="middle" font-family="'Liberation Sans',sans-serif" letter-spacing="-0.35">123</text></svg><span class="nm">MaxBoxSizeInPips</span><span class="val"><span class="vt">300</span></span></div>
<div class="row" style="top:185px"><svg class="ic" width="16" height="16" viewBox="0 0 16 16"><defs><linearGradient id="gbool" x1="0" y1="0" x2="1" y2="1"><stop offset="0" stop-color="#b4f2b6"/><stop offset="1" stop-color="#52cc5e"/></linearGradient><linearGradient id="og" x1="0" x2="1"><stop offset="0" stop-color="#ff7000"/><stop offset=".5" stop-color="#fff000"/><stop offset="1" stop-color="#ff7000"/></linearGradient></defs><path d="M0.5,2.6 Q0.5,0.5 2.6,0.5 L11,0.5 L15.5,5 L15.5,13.6 L13.7,15.5 L12.1,13.5 L10.4,14.9 L8.7,13.3 L6.9,14.9 L5.1,13.3 L3.4,14.9 L1.9,13.6 L0.5,15.1 Z" fill="url(#gbool)" stroke="#48b854" stroke-width="0.9"/><path d="M11,0.5 L11,5 L15.5,5 Z" fill="#d4f8d4" stroke="#48b854" stroke-width="0.72"/><path d="M2.2,10.3 L3.6,10.3 L7.8,5.4 M9.4,8.6 L10.2,9.7 L13.2,9.7" stroke="#0c7018" stroke-width="1.6" fill="none"/></svg><span class="nm">LimitBoxToMaxSize</span><span class="val"><span class="vt t">true</span></span></div>
<div class="row g" style="top:205px"><svg class="ic" width="16" height="16" viewBox="0 0 16 16"><defs><linearGradient id="gbool" x1="0" y1="0" x2="1" y2="1"><stop offset="0" stop-color="#b4f2b6"/><stop offset="1" stop-color="#52cc5e"/></linearGradient><linearGradient id="og" x1="0" x2="1"><stop offset="0" stop-color="#ff7000"/><stop offset=".5" stop-color="#fff000"/><stop offset="1" stop-color="#ff7000"/></linearGradient></defs><path d="M0.5,2.6 Q0.5,0.5 2.6,0.5 L11,0.5 L15.5,5 L15.5,13.6 L13.7,15.5 L12.1,13.5 L10.4,14.9 L8.7,13.3 L6.9,14.9 L5.1,13.3 L3.4,14.9 L1.9,13.6 L0.5,15.1 Z" fill="url(#gbool)" stroke="#48b854" stroke-width="0.9"/><path d="M11,0.5 L11,5 L15.5,5 Z" fill="#d4f8d4" stroke="#48b854" stroke-width="0.72"/><path d="M2.2,10.3 L3.6,10.3 L7.8,5.4 M9.4,8.6 L10.2,9.7 L13.2,9.7" stroke="#0c7018" stroke-width="1.6" fill="none"/></svg><span class="nm">StickBoxToLatestExtreme</span><span class="val"><span class="vt t">true</span></span></div>
<div class="row" style="top:225px"><svg class="ic" width="16" height="16" viewBox="0 0 16 16"><defs><linearGradient id="gbool" x1="0" y1="0" x2="1" y2="1"><stop offset="0" stop-color="#b4f2b6"/><stop offset="1" stop-color="#52cc5e"/></linearGradient><linearGradient id="og" x1="0" x2="1"><stop offset="0" stop-color="#ff7000"/><stop offset=".5" stop-color="#fff000"/><stop offset="1" stop-color="#ff7000"/></linearGradient></defs><path d="M0.5,2.6 Q0.5,0.5 2.6,0.5 L11,0.5 L15.5,5 L15.5,13.6 L13.7,15.5 L12.1,13.5 L10.4,14.9 L8.7,13.3 L6.9,14.9 L5.1,13.3 L3.4,14.9 L1.9,13.6 L0.5,15.1 Z" fill="url(#gbool)" stroke="#48b854" stroke-width="0.9"/><path d="M11,0.5 L11,5 L15.5,5 Z" fill="#d4f8d4" stroke="#48b854" stroke-width="0.72"/><path d="M2.2,10.3 L3.6,10.3 L7.8,5.4 M9.4,8.6 L10.2,9.7 L13.2,9.7" stroke="#0c7018" stroke-width="1.6" fill="none"/></svg><span class="nm">StickBoxOusideSRlevels</span><span class="val"><span class="vt t">true</span></span></div>
<div class="row g" style="top:245px"><svg class="ic" width="16" height="16" viewBox="0 0 16 16"><defs><linearGradient id="gdbl" x1="0" y1="0" x2="1" y2="1"><stop offset="0" stop-color="#bcecf4"/><stop offset="1" stop-color="#62c0d8"/></linearGradient><linearGradient id="og" x1="0" x2="1"><stop offset="0" stop-color="#ff7000"/><stop offset=".5" stop-color="#fff000"/><stop offset="1" stop-color="#ff7000"/></linearGradient></defs><path d="M0.5,2.6 Q0.5,0.5 2.6,0.5 L11,0.5 L15.5,5 L15.5,13.6 L13.7,15.5 L12.1,13.5 L10.4,14.9 L8.7,13.3 L6.9,14.9 L5.1,13.3 L3.4,14.9 L1.9,13.6 L0.5,15.1 Z" fill="url(#gdbl)" stroke="#54acc6" stroke-width="0.9"/><path d="M11,0.5 L11,5 L15.5,5 Z" fill="#dcf4f8" stroke="#54acc6" stroke-width="0.72"/><text x="1.6" y="8.6" font-size="7" font-weight="bold" fill="#0e5870" font-family="'Liberation Sans',sans-serif">1</text><path d="M4.6,10.6 L8,2.6" stroke="#0e5870" stroke-width="1.1"/><text x="7" y="11.2" font-size="7" font-weight="bold" fill="#0e5870" font-family="'Liberation Sans',sans-serif">2</text></svg><span class="nm">EntryFactor</span><span class="val"><span class="vt">0.15</span></span></div>
<div class="row" style="top:265px"><svg class="ic" width="16" height="16" viewBox="0 0 16 16"><defs><linearGradient id="gdbl" x1="0" y1="0" x2="1" y2="1"><stop offset="0" stop-color="#bcecf4"/><stop offset="1" stop-color="#62c0d8"/></linearGradient><linearGradient id="og" x1="0" x2="1"><stop offset="0" stop-color="#ff7000"/><stop offset=".5" stop-color="#fff000"/><stop offset="1" stop-color="#ff7000"/></linearGradient></defs><path d="M0.5,2.6 Q0.5,0.5 2.6,0.5 L11,0.5 L15.5,5 L15.5,13.6 L13.7,15.5 L12.1,13.5 L10.4,14.9 L8.7,13.3 L6.9,14.9 L5.1,13.3 L3.4,14.9 L1.9,13.6 L0.5,15.1 Z" fill="url(#gdbl)" stroke="#54acc6" stroke-width="0.9"/><path d="M11,0.5 L11,5 L15.5,5 Z" fill="#dcf4f8" stroke="#54acc6" stroke-width="0.72"/><text x="1.6" y="8.6" font-size="7" font-weight="bold" fill="#0e5870" font-family="'Liberation Sans',sans-serif">1</text><path d="M4.6,10.6 L8,2.6" stroke="#0e5870" stroke-width="1.1"/><text x="7" y="11.2" font-size="7" font-weight="bold" fill="#0e5870" font-family="'Liberation Sans',sans-serif">2</text></svg><span class="nm">SLFactor</span><span class="val"><span class="vt">0.65</span></span></div>
<div class="row g" style="top:285px"><svg class="ic" width="16" height="16" viewBox="0 0 16 16"><defs><linearGradient id="gclr" x1="0" y1="0" x2="1" y2="1"><stop offset="0" stop-color="#fdfdfd"/><stop offset="1" stop-color="#f2f2f2"/></linearGradient><linearGradient id="og" x1="0" x2="1"><stop offset="0" stop-color="#ff7000"/><stop offset=".5" stop-color="#fff000"/><stop offset="1" stop-color="#ff7000"/></linearGradient></defs><path d="M0.5,2.6 Q0.5,0.5 2.6,0.5 L11,0.5 L15.5,5 L15.5,13.6 L13.7,15.5 L12.1,13.5 L10.4,14.9 L8.7,13.3 L6.9,14.9 L5.1,13.3 L3.4,14.9 L1.9,13.6 L0.5,15.1 Z" fill="url(#gclr)" stroke="#686868" stroke-width="1.3"/><path d="M11,0.5 L11,5 L15.5,5 Z" fill="#ffffff" stroke="#686868" stroke-width="1.04"/><rect x="2.4" y="6.2" width="10.8" height="5" fill="url(#og)"/></svg><span class="nm">BoxColorOK</span><span class="val"><span class="sw" style="background:#add8e6"></span><span class="vt2">LightBlue</span></span></div>
<div class="row" style="top:305px"><svg class="ic" width="16" height="16" viewBox="0 0 16 16"><defs><linearGradient id="gclr" x1="0" y1="0" x2="1" y2="1"><stop offset="0" stop-color="#fdfdfd"/><stop offset="1" stop-color="#f2f2f2"/></linearGradient><linearGradient id="og" x1="0" x2="1"><stop offset="0" stop-color="#ff7000"/><stop offset=".5" stop-color="#fff000"/><stop offset="1" stop-color="#ff7000"/></linearGradient></defs><path d="M0.5,2.6 Q0.5,0.5 2.6,0.5 L11,0.5 L15.5,5 L15.5,13.6 L13.7,15.5 L12.1,13.5 L10.4,14.9 L8.7,13.3 L6.9,14.9 L5.1,13.3 L3.4,14.9 L1.9,13.6 L0.5,15.1 Z" fill="url(#gclr)" stroke="#686868" stroke-width="1.3"/><path d="M11,0.5 L11,5 L15.5,5 Z" fill="#ffffff" stroke="#686868" stroke-width="1.04"/><rect x="2.4" y="6.2" width="10.8" height="5" fill="url(#og)"/></svg><span class="nm">BoxColorNOK</span><span class="val"><span class="sw" style="background:#ff0000"></span><span class="vt2">Red</span></span></div>
<div class="row g" style="top:325px"><svg class="ic" width="16" height="16" viewBox="0 0 16 16"><defs><linearGradient id="gclr" x1="0" y1="0" x2="1" y2="1"><stop offset="0" stop-color="#fdfdfd"/><stop offset="1" stop-color="#f2f2f2"/></linearGradient><linearGradient id="og" x1="0" x2="1"><stop offset="0" stop-color="#ff7000"/><stop offset=".5" stop-color="#fff000"/><stop offset="1" stop-color="#ff7000"/></linearGradient></defs><path d="M0.5,2.6 Q0.5,0.5 2.6,0.5 L11,0.5 L15.5,5 L15.5,13.6 L13.7,15.5 L12.1,13.5 L10.4,14.9 L8.7,13.3 L6.9,14.9 L5.1,13.3 L3.4,14.9 L1.9,13.6 L0.5,15.1 Z" fill="url(#gclr)" stroke="#686868" stroke-width="1.3"/><path d="M11,0.5 L11,5 L15.5,5 Z" fill="#ffffff" stroke="#686868" stroke-width="1.04"/><rect x="2.4" y="6.2" width="10.8" height="5" fill="url(#og)"/></svg><span class="nm">BoxColorMAX</span><span class="val"><span class="sw" style="background:#ffa500"></span><span class="vt2">Orange</span></span></div>
<div class="row" style="top:345px"><svg class="ic" width="16" height="16" viewBox="0 0 16 16"><defs><linearGradient id="gclr" x1="0" y1="0" x2="1" y2="1"><stop offset="0" stop-color="#fdfdfd"/><stop offset="1" stop-color="#f2f2f2"/></linearGradient><linearGradient id="og" x1="0" x2="1"><stop offset="0" stop-color="#ff7000"/><stop offset=".5" stop-color="#fff000"/><stop offset="1" stop-color="#ff7000"/></linearGradient></defs><path d="M0.5,2.6 Q0.5,0.5 2.6,0.5 L11,0.5 L15.5,5 L15.5,13.6 L13.7,15.5 L12.1,13.5 L10.4,14.9 L8.7,13.3 L6.9,14.9 L5.1,13.3 L3.4,14.9 L1.9,13.6 L0.5,15.1 Z" fill="url(#gclr)" stroke="#686868" stroke-width="1.3"/><path d="M11,0.5 L11,5 L15.5,5 Z" fill="#ffffff" stroke="#686868" stroke-width="1.04"/><rect x="2.4" y="6.2" width="10.8" height="5" fill="url(#og)"/></svg><span class="nm">LevelColor</span><span class="val"><span class="sw" style="background:#ffff00"></span><span class="vt2">Yellow</span></span></div>
<div class="row g" style="top:365px"><svg class="ic" width="16" height="16" viewBox="0 0 16 16"><defs><linearGradient id="gbool" x1="0" y1="0" x2="1" y2="1"><stop offset="0" stop-color="#b4f2b6"/><stop offset="1" stop-color="#52cc5e"/></linearGradient><linearGradient id="og" x1="0" x2="1"><stop offset="0" stop-color="#ff7000"/><stop offset=".5" stop-color="#fff000"/><stop offset="1" stop-color="#ff7000"/></linearGradient></defs><path d="M0.5,2.6 Q0.5,0.5 2.6,0.5 L11,0.5 L15.5,5 L15.5,13.6 L13.7,15.5 L12.1,13.5 L10.4,14.9 L8.7,13.3 L6.9,14.9 L5.1,13.3 L3.4,14.9 L1.9,13.6 L0.5,15.1 Z" fill="url(#gbool)" stroke="#48b854" stroke-width="0.9"/><path d="M11,0.5 L11,5 L15.5,5 Z" fill="#d4f8d4" stroke="#48b854" stroke-width="0.72"/><path d="M2.2,10.3 L3.6,10.3 L7.8,5.4 M9.4,8.6 L10.2,9.7 L13.2,9.7" stroke="#0c7018" stroke-width="1.6" fill="none"/></svg><span class="nm">showProfitZone</span><span class="val"><span class="vt t">true</span></span></div>
<div class="row" style="top:385px"><svg class="ic" width="16" height="16" viewBox="0 0 16 16"><defs><linearGradient id="gclr" x1="0" y1="0" x2="1" y2="1"><stop offset="0" stop-color="#fdfdfd"/><stop offset="1" stop-color="#f2f2f2"/></linearGradient><linearGradient id="og" x1="0" x2="1"><stop offset="0" stop-color="#ff7000"/><stop offset=".5" stop-color="#fff000"/><stop offset="1" stop-color="#ff7000"/></linearGradient></defs><path d="M0.5,2.6 Q0.5,0.5 2.6,0.5 L11,0.5 L15.5,5 L15.5,13.6 L13.7,15.5 L12.1,13.5 L10.4,14.9 L8.7,13.3 L6.9,14.9 L5.1,13.3 L3.4,14.9 L1.9,13.6 L0.5,15.1 Z" fill="url(#gclr)" stroke="#686868" stroke-width="1.3"/><path d="M11,0.5 L11,5 L15.5,5 Z" fill="#ffffff" stroke="#686868" stroke-width="1.04"/><rect x="2.4" y="6.2" width="10.8" height="5" fill="url(#og)"/></svg><span class="nm">ProfitColor</span><span class="val"><span class="sw" style="background:#90ee90"></span><span class="vt2">LightGreen</span></span></div>
<div class="row g" style="top:405px"><svg class="ic" width="16" height="16" viewBox="0 0 16 16"><defs><linearGradient id="gab" x1="0" y1="0" x2="1" y2="1"><stop offset="0" stop-color="#f3eba4"/><stop offset="1" stop-color="#dccb62"/></linearGradient><linearGradient id="og" x1="0" x2="1"><stop offset="0" stop-color="#ff7000"/><stop offset=".5" stop-color="#fff000"/><stop offset="1" stop-color="#ff7000"/></linearGradient></defs><path d="M0.5,2.6 Q0.5,0.5 2.6,0.5 L11,0.5 L15.5,5 L15.5,13.6 L13.7,15.5 L12.1,13.5 L10.4,14.9 L8.7,13.3 L6.9,14.9 L5.1,13.3 L3.4,14.9 L1.9,13.6 L0.5,15.1 Z" fill="url(#gab)" stroke="#c2b250" stroke-width="0.9"/><path d="M11,0.5 L11,5 L15.5,5 Z" fill="#f6f0c0" stroke="#c2b250" stroke-width="0.72"/><text x="7.2" y="11.4" font-size="9.6" fill="#4a4200" stroke="#4a4200" stroke-width="0.25" text-anchor="middle" font-family="'Liberation Sans',sans-serif" letter-spacing="-0.3">ab</text></svg><span class="nm">objPrefix</span><span class="val"><span class="vt">LB2-</span></span></div>
<div id="sb"><i></i>
<svg style="position:absolute;left:3.8px;top:6.5px" width="9" height="7" viewBox="0 0 9 7"><polyline points="0.8,5.6 4.3,1.6 7.8,5.6" fill="none" stroke="#505050" stroke-width="1.6"/></svg>
<svg style="position:absolute;left:3.8px;top:412px" width="9" height="7" viewBox="0 0 9 7"><polyline points="0.8,1.2 4.3,5.2 7.8,1.2" fill="none" stroke="#505050" stroke-width="1.6"/></svg>
</div>
</div>
<div id="h3">3Hrs</div>
<div id="ok">OK</div>
<div id="ca">Cancel</div>
</div>
</body></html>
